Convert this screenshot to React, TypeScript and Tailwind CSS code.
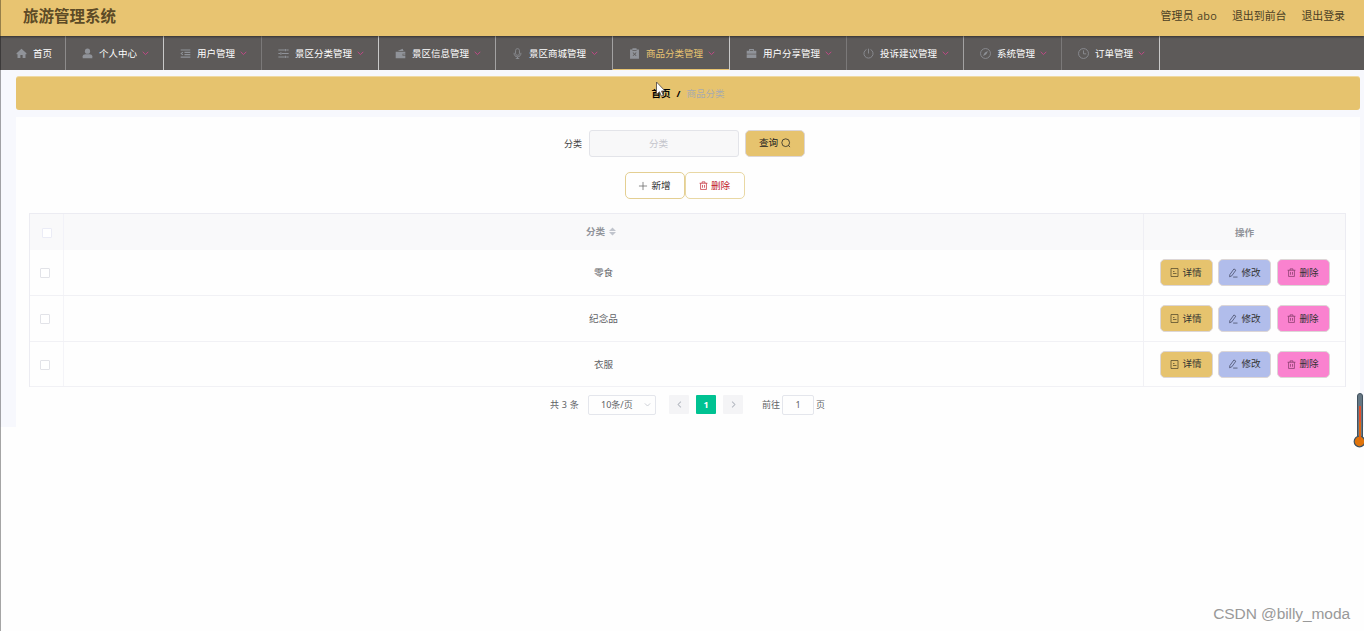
import React from "react";

type IconProps = { className?: string };

function Svg({ className, children }: IconProps & { children: React.ReactNode }) {
  return (
    <svg viewBox="0 0 16 16" className={className} fill="none" stroke="currentColor" strokeWidth={1.2}>
      {children}
    </svg>
  );
}

const icons: Record<string, React.ReactNode> = {
  home: <path fill="currentColor" stroke="none" d="M8 1.2 0.8 7.6V9h1.4v5.5h4.2V10h3.2v4.5h4.2V9h1.4V7.6Z" />,
  user: (
    <g fill="currentColor" stroke="none">
      <circle cx="8" cy="4.6" r="3.8" />
      <path d="M1 15v-3c0-2 2-3 4-3h6c2 0 4 1 4 3v3Z" />
    </g>
  ),
  fold: <path strokeWidth={1.6} d="M1 2.800h14M6.500 6.300H15M6.500 9.700H15M1 13.200h14M4.200 6 1.800 8l2.400 2" />,
  operation: (
    <path
      strokeWidth={1.6}
      d="M0.500 3h9M12 3h3.500M0.500 8H3M5.500 8h10M0.500 13h9M12 13h3.500M10.700 1.300v3.400M4.200 6.300v3.400M10.700 11.300v3.400"
    />
  ),
  wallet: (
    <g fill="currentColor" stroke="none">
      <path d="M1 5.5h14v2.7h-4v3h4V15H1Z" />
      <path d="M4 4.5 11 1l1.5 3.5ZM12 9h3v1.5h-3Z" />
    </g>
  ),
  mic: <path d="M8 1c-1.8 0-2.8 1.2-2.8 2.8v4c0 1.6 1 2.8 2.8 2.8s2.8-1.2 2.8-2.8v-4C10.8 2.2 9.8 1 8 1ZM3 7c0 4 2 5.8 5 5.8S13 11 13 7M8 13v2.5M5.5 15.4h5" />,
  claim: (
    <path
      fill="currentColor"
      stroke="none"
      fillRule="evenodd"
      d="M1.5 2H5V.5h6V2h3.500v13.500h-13ZM5 3.200v1h6v-1ZM5.300 7l2 2-2 2 .8.8 2-2 2 2 .8-.8-2-2 2-2-.8-.8-2 2-2-2Z"
    />
  ),
  briefcase: (
    <g fill="currentColor" stroke="none">
      <path d="M4.500 4V1.500h7V4H15v4.300H1V4Zm1.300 0h4.400V2.800H5.800Z" />
      <path d="M1 9.300h14V14.500H1Z" />
    </g>
  ),
  power: <path d="M8 1v7M5 2.200a6.600 6.600 0 1 0 6 0" />,
  compass: (
    <>
      <circle cx="8" cy="8" r="7.200" />
      <path d="m11.200 4.800-4.200 2.200L4.800 11.200 9 9Z" fill="currentColor" strokeWidth={0.4} />
    </>
  ),
  clock: (
    <>
      <circle cx="8" cy="8" r="7.200" />
      <path d="M8 3.500V8.500h4" />
    </>
  ),
};

const menu = [
  { icon: "user", label: "个人中心", width: "w-[98px]", line: "border-[#c9c9c9]" },
  { icon: "fold", label: "用户管理", width: "w-[98px]", line: "border-[#7b7979]" },
  { icon: "operation", label: "景区分类管理", width: "w-[117px]", line: "border-[#c9c9c9]" },
  { icon: "wallet", label: "景区信息管理", width: "w-[117px]", line: "border-[#a3a2a2]" },
  { icon: "mic", label: "景区商城管理", width: "w-[117px]", line: "border-[#a3a2a2]" },
  { icon: "claim", label: "商品分类管理", width: "w-[117px]", line: "border-[#c9c9c9]", active: true },
  { icon: "briefcase", label: "用户分享管理", width: "w-[117px]", line: "border-[#7b7979]" },
  { icon: "power", label: "投诉建议管理", width: "w-[117px]", line: "border-[#a3a2a2]" },
  { icon: "compass", label: "系统管理", width: "w-[98px]", line: "border-[#7b7979]" },
  { icon: "clock", label: "订单管理", width: "w-[98px]", line: "border-[#c9c9c9]" },
];

function Chevron({ className, d = "m2 5.500 6 6 6-6" }: IconProps & { d?: string }) {
  return (
    <Svg className={className}>
      <path d={d} strokeWidth={1.8} />
    </Svg>
  );
}

function TrashIcon({ className }: IconProps) {
  return (
    <Svg className={className}>
      <path d="M1 4h14M5.500 4V1.500h5V4M2.800 4v11h10.400V4M6.200 7v5M9.800 7v5" />
    </Svg>
  );
}

function DocIcon({ className }: IconProps) {
  return (
    <svg viewBox="0 0 9 9" className={className} fill="none" stroke="currentColor" strokeWidth={0.8}>
      <path d="M1 0.500h7v8H1ZM3 3.500h1.500M3 5.500h3.500" />
    </svg>
  );
}

function EditIcon({ className }: IconProps) {
  return (
    <Svg className={className}>
      <path d="M9.500 1.500 12.500 3.500 6 12.500 2.500 14 3 10.500ZM8.200 14.500h7" />
    </Svg>
  );
}

function Checkbox({ className = "border-[#e2e3e8]" }: IconProps) {
  return <span className={"block size-[10px] rounded-[1px] border bg-white " + className} />;
}

const actionBase =
  "flex h-[27px] w-[53px] items-center justify-center gap-[3px] rounded-[5px] border border-[#dcd6d6] text-[9.600px] text-[#333]";

function Row({ label, height }: { label: string; height: string }) {
  return (
    <div className={"flex border-b border-[#f1f1f5] " + height}>
      <div className="flex w-[34px] items-center border-r border-[#f4f4f8] pt-[1px] pl-[10px]">
        <Checkbox />
      </div>
      <div className="flex flex-1 items-center justify-center border-r border-[#f1f1f5] pt-[1px] text-[9.600px] text-[#606266]">
        {label}
      </div>
      <div className="flex w-[201px] items-center justify-center gap-[5.500px]">
        <button className={actionBase + " bg-[#e6c36e]"}>
          <DocIcon className="size-[9px] text-[#5c5030]" />
          详情
        </button>
        <button className={actionBase + " bg-[#b1bdeb]"}>
          <EditIcon className="size-[10px] text-[#414762]" />
          修改
        </button>
        <button className={actionBase + " bg-[#fa82cf]"}>
          <TrashIcon className="size-[9px] text-[#7a3560]" />
          删除
        </button>
      </div>
    </div>
  );
}

export default function App() {
  return (
    <div className="relative flex h-[631px] w-[1364px] flex-col overflow-hidden bg-[#fefefe] font-['Noto_Sans','Noto_Sans_CJK_SC',sans-serif] leading-none">
      <header className="relative z-10 flex h-[36px] shrink-0 items-center justify-between bg-[#e8c471] pr-[19px] pb-[3px] pl-[23px] shadow-[0_1px_2px_rgba(0,0,0,0.45)]">
        <h1 className="text-[15.500px] font-bold text-[#5d4b26]">旅游管理系统</h1>
        <div className="flex gap-[15px] text-[10.900px] text-[#4b3f25]">
          <span className="font-['Open_Sans','Noto_Sans_CJK_SC',sans-serif] tracking-[0.250px]">管理员 abo</span>
          <span>退出到前台</span>
          <span>退出登录</span>
        </div>
      </header>

      <nav className="flex h-[34px] shrink-0 bg-[#5d5a59] text-[9.500px] text-white">
        <div className="flex w-[66px] items-center gap-[6px] border-r border-[#8d8b8b] pt-px pl-[16px]">
          <Svg className="size-[11px] text-[#909399]">{icons.home}</Svg>
          首页
        </div>
        {menu.map((m) => (
          <div
            key={m.label}
            className={
              "flex items-center border-r pt-px pl-[16px] " +
              m.width +
              " " +
              m.line +
              (m.active ? " text-[#e8c471] shadow-[inset_0_-1px_0_#e8c471]" : "")
            }
          >
            <Svg className="size-[11px] shrink-0 text-[#909399]">{icons[m.icon]}</Svg>
            <span className={"ml-[6px] shrink-0 pt-px whitespace-nowrap " + (m.label.length > 4 ? "w-[57px]" : "w-[38px]")}>
              {m.label}
            </span>
            <svg viewBox="0 0 7 5" className="ml-[5px] h-[5px] w-[7px] shrink-0" fill="none" stroke="#c04886">
              <path d="M0.700 0.800 3.500 3.600 6.300 0.800" />
            </svg>
          </div>
        ))}
      </nav>

      <main className="flex h-[357px] shrink-0 flex-col bg-[#f7f8fd] pt-[6px] pr-[4px] pl-[16px]">
        <div className="flex h-[34px] shrink-0 items-center justify-center rounded-[3px] border-t border-[#efd9a4] bg-[#e6c36e] text-[9.500px]">
          <span className="font-bold text-black">首页</span>
          <span className="mx-[6px] font-bold text-black">/</span>
          <span className="text-[#a9abad]">商品分类</span>
        </div>

        <section className="mt-[7px] flex h-[310px] flex-col bg-[#fefefe] pr-[14px] pl-[13px]">
          <div className="mt-[13px] flex h-[27px] items-center justify-center pr-[6px] text-[9.600px]">
            <span className="mr-[7px] text-[9px] text-[#444]">分类</span>
            <div className="flex h-[27px] w-[150px] items-center justify-center rounded-[3px] border border-[#e3e4e9] bg-[#f8f8f9] pr-[11px] text-[#c4c5cc]">
              分类
            </div>
            <button className="ml-[6px] flex h-[27px] w-[60px] items-center justify-center gap-[3px] rounded-[5px] border border-[#dcd6d6] bg-[#e6c36e] pb-[1px] text-[#222]">
              查询
              <Svg className="size-[10px]">
                <circle cx="7.500" cy="7.500" r="6.200" />
                <path d="m12 12 2.500 2.500" />
              </Svg>
            </button>
          </div>

          <div className="mt-[15px] flex h-[27px] justify-center pr-[6px] text-[9.600px]">
            <button className="flex w-[60px] items-center justify-center gap-[3px] rounded-[5px] border border-[#e4cf92] bg-white text-[#333]">
              <Svg className="size-[10px] text-[#666]">
                <path d="M8 1.500v13M1.500 8h13" />
              </Svg>
              新增
            </button>
            <button className="flex w-[60px] items-center justify-center gap-[3px] rounded-[5px] border border-[#e9d8a4] bg-white text-[#c0202b]">
              <TrashIcon className="size-[9px]" />
              删除
            </button>
          </div>

          <div className="mt-[14px] border-x border-t border-[#ececf2]">
            <div className="flex h-[36px] bg-[#f9f9fa] text-[9.600px] font-bold text-[#909399]">
              <div className="flex w-[34px] items-center border-r border-[#f2f2f8] pt-[2px] pl-[12px]">
                <Checkbox className="border-[#ebecf6]" />
              </div>
              <div className="flex flex-1 items-center justify-center gap-[4px] border-r border-[#efeff4] pr-[5px] pb-[1px]">
                分类
                <svg viewBox="0 0 8 10" className="h-[9px] w-[7px]" fill="#c0c4cc">
                  <path d="M4 0.500 8 4.300H0ZM4 9.500 0 5.700h8Z" />
                </svg>
              </div>
              <div className="flex w-[201px] items-center justify-center pt-[1px]">操作</div>
            </div>
            <Row label="零食" height="h-[46px]" />
            <Row label="纪念品" height="h-[46px]" />
            <Row label="衣服" height="h-[45px]" />
          </div>

          <div className="mt-[8px] flex h-[20px] items-center pl-[521px] text-[9px] text-[#606266]">
            <span className="w-[38px] pb-px tracking-[0.200px]">共 3 条</span>
            <div className="flex h-[20px] w-[68px] items-center justify-between rounded-[2px] border border-[#e4e6ec] pr-[4px] pb-px pl-[12px]">
              10条/页
              <Chevron className="size-[7px] text-[#c0c4cc]" />
            </div>
            <span className="mb-px ml-[13px] flex h-[19px] w-[20px] items-center justify-center rounded-[1px] bg-[#f4f4f6] text-[#b4b8c0]">
              <Chevron className="size-[9px]" d="m10.500 3-5 5 5 5" />
            </span>
            <span className="mb-px ml-[7px] flex h-[19px] w-[20px] items-center justify-center rounded-[1px] bg-[#00c292] font-bold text-white">
              1
            </span>
            <span className="mb-px ml-[7px] flex h-[19px] w-[20px] items-center justify-center rounded-[1px] bg-[#f4f4f6] text-[#b4b8c0]">
              <Chevron className="size-[9px]" d="m5.500 3 5 5-5 5" />
            </span>
            <span className="ml-[19px] pb-px">前往</span>
            <span className="mr-[2px] ml-[2px] flex h-[20px] w-[32px] items-center justify-center rounded-[2px] border border-[#e4e6ec] pb-px">
              1
            </span>
            <span className="pb-px">页</span>
          </div>
        </section>
      </main>

      <div className="absolute top-0 left-0 z-20 h-full w-px bg-black/35" />

      <svg className="absolute top-[81px] left-[655px] h-[17px] w-[11px]" viewBox="0 0 11 17">
        <path d="M1.500 1v12.500l3-2.700 1.900 4.400 2-.9-1.900-4.200h3.700Z" fill="white" stroke="#5a5047" strokeWidth="0.900" />
      </svg>

      <svg className="absolute top-[392px] left-[1353px] h-[57px] w-[11px]" viewBox="0 0 11 57">
        <rect x="4.500" y="1.500" width="5" height="48" rx="2.500" fill="#667783" stroke="#42525f" />
        <circle cx="6.500" cy="49.500" r="5.300" fill="#e0740c" stroke="#42525f" strokeWidth="1.200" />
        <path d="M7 14v32" stroke="#e2502b" strokeWidth="2" />
        <path d="M7 30v18" stroke="#df6612" strokeWidth="2" />
      </svg>

      <div className="absolute right-[14px] bottom-[10px] font-['Liberation_Sans',sans-serif] text-[15.500px] tracking-[-0.080px] whitespace-nowrap text-[#999]">
        CSDN @billy_moda
      </div>
    </div>
  );
}
